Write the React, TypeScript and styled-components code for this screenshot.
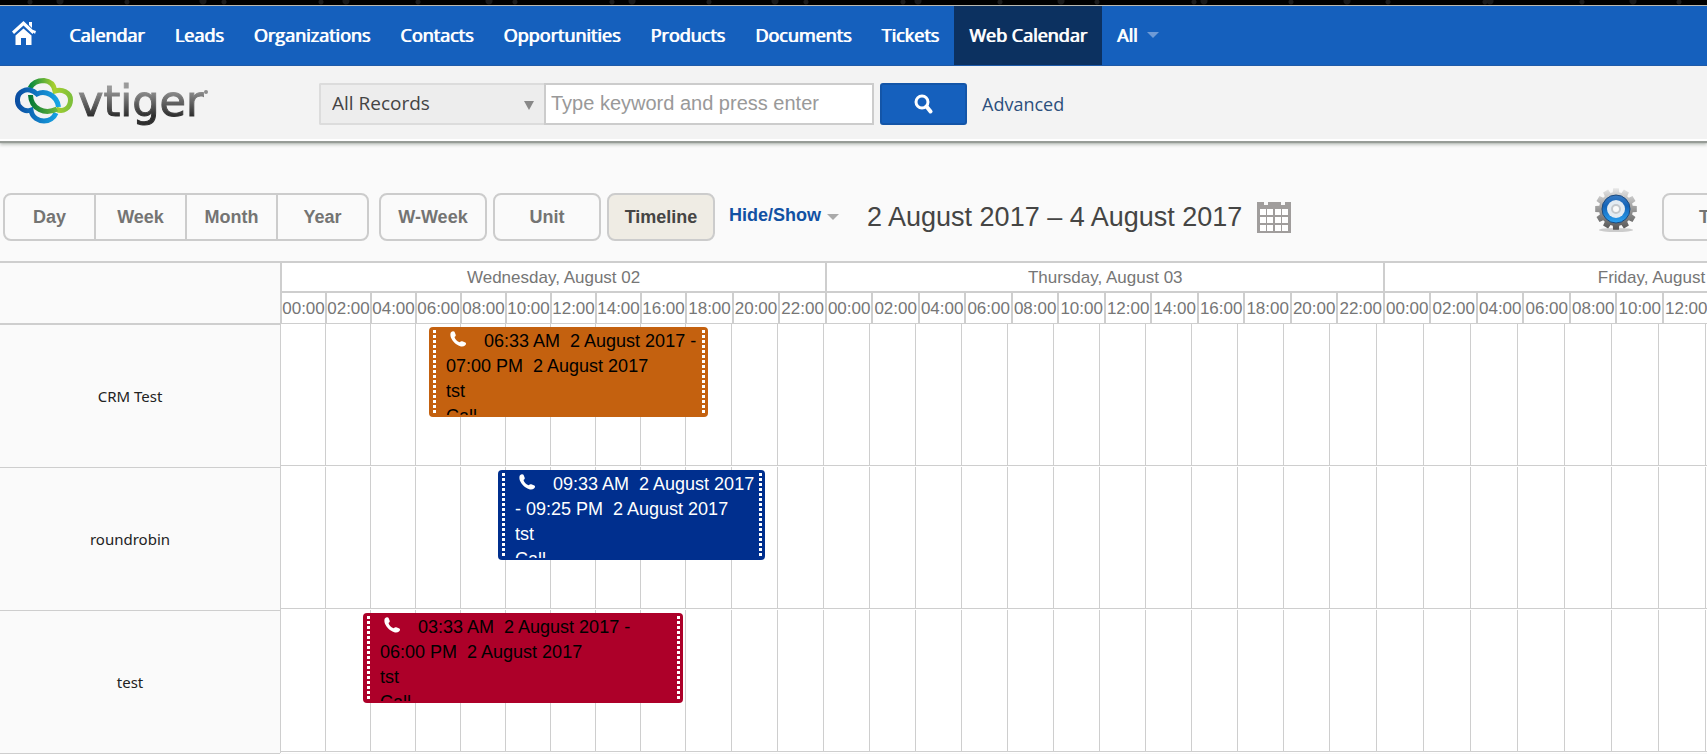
import React from "react";
import styled, { createGlobalStyle } from "styled-components";

const GlobalStyle = createGlobalStyle`
  *, *::before, *::after { box-sizing: border-box; }
  html { background: #fafafa; }
  body {
    margin: 0;
    overflow-x: hidden;
    color: #444;
    font-family: "Liberation Sans", Arial, sans-serif;
  }
  button, input, select { font: inherit; }
`;

const line = "#cecece";
const openSans = `"Open Sans", "Noto Sans", sans-serif`;

/* ---------- navigation ---------- */

const TopStrip = styled.div`
  height: 6px;
  border-bottom: 1px solid #b9b9b0;
  background:
    radial-gradient(circle at 30px 2px, #1c1c1c 2px, transparent 3px) 0 0 / 97px 5px,
    radial-gradient(circle at 60px 1px, #1a1a1a 3px, transparent 4px) 0 0 / 143px 5px,
    #000;
`;

const Nav = styled.nav`
  display: flex;
  height: 60px;
  background: #1560bd;
  border-bottom: 1px solid #1e5aa8;
  white-space: nowrap;
`;

const NavLink = styled.a<{ $active?: boolean }>`
  display: flex;
  align-items: center;
  gap: 10px;
  padding: 0 15px 1px;
  background: ${(p) => (p.$active ? "#0c3160" : "transparent")};
  color: #fff;
  font: 400 18px/24px ${openSans};
  text-decoration: none;
  text-shadow: 1px 0 #fff;
`;

const HomeLink = styled(NavLink)`
  padding: 0 18px 6px 12px;
`;

const Caret = styled.span<{ $color: string }>`
  border: 6px solid transparent;
  border-top-color: ${(p) => p.$color};
  border-bottom-width: 0;
`;

/* ---------- search header ---------- */

const Header = styled.header`
  display: flex;
  align-items: center;
  height: 75px;
  padding: 2px 16px 0 15px;
  border-bottom: 2px solid #fff;
  background: #f3f3f3;
  box-shadow: 0 2px 1px #979c97, 0 4px 3px #c4c8c4;
`;

const Brand = styled.a`
  display: flex;
  align-items: center;
  width: 304px;
  padding-bottom: 6px;
  text-decoration: none;
`;

const BrandName = styled.span`
  margin-left: 5px;
  background: linear-gradient(#999 25%, #2e2e2e 80%);
  background-clip: text;
  -webkit-background-clip: text;
  -webkit-text-stroke: 1px transparent;
  color: transparent;
  font: 43px/50px "DejaVu Sans", sans-serif;
`;

const BrandDot = styled.span`
  width: 4px;
  height: 4px;
  margin-bottom: 18px;
  border-radius: 50%;
  background: #8d8d8d;
`;

const SearchForm = styled.form`
  display: flex;
  align-items: center;
`;

const SelectWrap = styled.div`
  position: relative;
  width: 225px;
`;

const RecordSelect = styled.select`
  appearance: none;
  width: 100%;
  height: 42px;
  padding: 0 11px 2px;
  border: 2px solid #dcdcdc;
  border-right: 0;
  border-radius: 2px 0 0 2px;
  background: #ededed;
  color: #444;
  font: 19px/24px ${openSans};
`;

const SelectArrow = styled.svg`
  position: absolute;
  right: 10px;
  top: 18px;
  pointer-events: none;
`;

const Keyword = styled.input`
  width: 330px;
  height: 42px;
  padding: 0 5px;
  border: 2px solid #ccc;
  background: #fff;
  font-size: 20px;
  &::placeholder { color: #999; opacity: 1; }
`;

const SearchButton = styled.button`
  display: grid;
  place-items: center;
  width: 87px;
  height: 42px;
  margin: 0 15px 0 6px;
  border: 2px solid #1355a8;
  border-radius: 3px;
  background: #1560bd;
`;

const Advanced = styled.a`
  color: #2c4f7c;
  font: 18px/24px ${openSans};
  text-decoration: none;
`;

/* ---------- calendar toolbar ---------- */

const Toolbar = styled.div`
  display: flex;
  align-items: center;
  padding: 47px 0 17px 3px;
  white-space: nowrap;
`;

const ViewGroup = styled.div`
  display: flex;
  margin-right: 10px;
`;

const ViewButton = styled.button<{ $active?: boolean }>`
  width: 108px;
  height: 48px;
  margin-right: 6px;
  padding: 0;
  border: 2px solid #ccc;
  border-radius: 8px;
  background: ${(p) => (p.$active ? "#efece4" : "#fafafa")};
  color: ${(p) => (p.$active ? "#454544" : "#747473")};
  font-size: 18px;
  font-weight: 700;
`;

const GroupButton = styled(ViewButton)`
  width: 93px;
  margin: 0 -2px 0 0;
  border-radius: 0;
  &:first-child { border-radius: 8px 0 0 8px; }
  &:last-child { border-radius: 0 8px 8px 0; margin: 0; }
`;

const HideShow = styled.button`
  display: flex;
  align-items: center;
  gap: 6px;
  margin: 0 28px 4px 8px;
  padding: 0;
  border: 0;
  background: none;
  color: #1251a3;
  font-size: 18px;
  font-weight: 700;
  ${Caret} { margin-top: 4px; }
`;

const DateRange = styled.h1`
  margin: 0;
  color: #454544;
  font-size: 27px;
  font-weight: 400;
  line-height: 32px;
`;

const IconButton = styled.button`
  display: block;
  margin-left: 15px;
  padding: 0;
  border: 0;
  background: none;
  line-height: 0;
`;

const ToolbarEnd = styled.div`
  display: flex;
  align-items: center;
  width: 112px;
  margin-left: auto;
  overflow: hidden;
`;

const GearButton = styled(IconButton)`
  flex: none;
  margin: 0 24px 14px 0;
`;

const TodayButton = styled(ViewButton)`
  flex: none;
  width: auto;
  margin: 0;
  padding: 0 35px;
`;

/* ---------- timeline ---------- */

const Timeline = styled.main`
  display: flex;
  margin-top: -2px;
  border-top: 2px solid ${line};
`;

const People = styled.ul`
  flex: none;
  width: 280px;
  margin: 0;
  padding: 60px 0 0;
  list-style: none;
`;

const Person = styled.li`
  display: grid;
  place-items: center;
  height: 143px;
  padding-right: 20px;
  border-bottom: 1px solid ${line};
  color: #222;
  font: 15px/20px "Noto Sans", sans-serif;
  &:first-child {
    height: 145px;
    border-top: 2px solid ${line};
  }
`;

const Schedule = styled.div`
  flex: 1;
  min-width: 0;
  overflow: hidden;
`;

const Scale = styled.table`
  width: 1663px;
  border-left: 2px solid ${line};
  border-spacing: 0;
  table-layout: fixed;
  background: #fff;
  color: #767676;
  font-size: 17px;
  th {
    padding: 2px 0 0;
    border-right: 2px solid ${line};
    font-weight: 400;
  }
`;

const DayHead = styled.th`
  height: 30px;
  border-bottom: 2px solid ${line};
`;

const HourHead = styled.th`
  height: 31px;
  border-bottom: 1px solid ${line};
`;

const Track = styled.div`
  position: relative;
  display: grid;
  grid-template-columns: repeat(9, 45px) repeat(14, 46px) repeat(13, 47px);
  height: 143px;
  border-left: 1px solid ${line};
  padding-bottom: 1px;
  background: #fff;
`;

const Slot = styled.div`
  border-right: 1px solid ${line};
  border-bottom: 1px solid ${line};
`;

const EventCard = styled.article<{ $bg: string; $fg: string }>`
  position: absolute;
  top: 3px;
  height: 90px;
  padding: 2px 6px 2px 17px;
  border-radius: 4px;
  background: ${(p) => p.$bg};
  color: ${(p) => p.$fg};
  font-size: 18px;
  line-height: 25px;
  &::before, &::after {
    content: "";
    position: absolute;
    top: 3px;
    bottom: 2px;
    width: 3px;
    background: repeating-linear-gradient(#fff 0 3px, transparent 3px 5px);
  }
  &::before { left: 4px; }
  &::after { right: 3px; }
`;

const EventText = styled.div`
  height: 86px;
  overflow: hidden;
  white-space: pre-wrap;
  svg { margin: 0 18px 0 4px; }
  p { margin: 0; }
`;

const HomeIcon = () => (
  <svg width="24" height="24" viewBox="0 0 24 24" fill="#fff">
    <path d="M11.500 0 0 10.500 2 13l9.500-8.500 9 8.500 2-2.500z" />
    <path d="M17 1h3v6l-3-3zM21 9l3 1-1 3-2-2z" />
    <path d="m11.500 7.500-8 7V24h5.500v-7h5v7h5.500v-9.500z" />
  </svg>
);

const PhoneIcon = () => (
  <svg width="16" height="16" viewBox="0 0 16 16" fill="#fff">
    <path d="M.8 1.500C2 .2 3.600-.3 4.500.8l1.200 3c.2.900-.1 1.500-1.200 2.200.6 2.300 2.700 4.400 5.300 5.300.8-1.100 1.500-1.400 2.500-1l3.100 1.300c1 .7.800 1.900-.4 2.900-1.800 1.600-4.700 1.400-7.800-.7C3.300 11.400-1 5.700.8 1.500z" />
  </svg>
);

const SearchIcon = () => (
  <svg width="20" height="20" viewBox="0 0 20 20" fill="none" stroke="#fff">
    <circle cx="8" cy="8" r="6" strokeWidth="3" />
    <path d="m12.500 12.500 4 5" strokeWidth="4" strokeLinecap="round" />
  </svg>
);

const CloudLogo = () => (
  <svg width="58" height="46" viewBox="0 0 58 46" fill="none" strokeWidth="5">
    <defs>
      <linearGradient id="green" x1="0" x2="1">
        <stop offset="0" stopColor="#07883e" />
        <stop offset=".6" stopColor="#a9d030" />
        <stop offset="1" stopColor="#7fc03a" />
      </linearGradient>
      <linearGradient id="leaf" x1="0" x2="1">
        <stop offset="0" stopColor="#067a35" />
        <stop offset="1" stopColor="#6db83c" />
      </linearGradient>
      <linearGradient id="blue" x1="0" x2="1">
        <stop offset="0" stopColor="#0b4ea2" />
        <stop offset="1" stopColor="#16a5e4" />
      </linearGradient>
    </defs>
    <path d="M15 10C18 4 23 2.500 29 2.500 35 3 39 7 40 13c7-2 15.500 1 15.500 9S48 35 41 31" stroke="url(#green)" />
    <path d="M43.500 29C42 17 30 12 22 16 18 12 12 10.500 8 13 1 16 1 26 6 30c3 3 7 3 10 2 1 8 8 11 13 11s10-3 12-8" stroke="url(#blue)" />
    <path d="M15.500 17C16 31 30 37 42 31" stroke="url(#leaf)" />
  </svg>
);

const CalendarIcon = () => (
  <svg width="34" height="31" viewBox="0 0 34 31">
    <path d="M0 0h7v3h4V0h13v3h4V0h6v31H0z" fill="#a09d9c" />
    {[7, 15, 23].map((y) =>
      [3, 10, 18, 25].map((x) => <rect key={`${x}-${y}`} x={x} y={y} width="6" height="6" fill="#fff" />)
    )}
  </svg>
);

/* Outline of a twelve-toothed wheel centred on (21, 21). */
const gearOutline = Array.from({ length: 12 }, (_, i) =>
  [[-11, 17], [-8, 21], [8, 21], [11, 17]].map(([offset, radius]) => {
    const angle = ((i * 30 + offset) * Math.PI) / 180;
    return `${(21 + radius * Math.sin(angle)).toFixed(1)},${(21 - radius * Math.cos(angle)).toFixed(1)}`;
  }).join(" ")
).join(" ");

const GearIcon = () => (
  <svg width="43" height="44" viewBox="0 0 43 44">
    <defs>
      <linearGradient id="steel" x1="0" x2="0" y1="0" y2="1">
        <stop offset="0" stopColor="#e8e8e8" />
        <stop offset=".5" stopColor="#999" />
        <stop offset="1" stopColor="#555" />
      </linearGradient>
      <linearGradient id="ring" x1="0" x2="0" y1="0" y2="1">
        <stop offset="0" stopColor="#3a7cc4" />
        <stop offset=".4" stopColor="#1263b8" />
        <stop offset="1" stopColor="#2ba3f2" />
      </linearGradient>
    </defs>
    <ellipse cx="21" cy="42" rx="17" ry="2" fill="#ccc" />
    <polygon points={gearOutline} fill="url(#steel)" />
    <circle cx="21" cy="21" r="14" fill="url(#ring)" stroke="#1d4a7d" strokeWidth="1" />
    <circle cx="21" cy="21" r="9" fill="#e3ebf2" />
    <circle cx="21" cy="21" r="4" fill="#fafafa" stroke="#c4c8cc" strokeWidth="2" />
  </svg>
);

const modules = ["Calendar", "Leads", "Organizations", "Contacts", "Opportunities", "Products", "Documents", "Tickets", "Web Calendar"];
const days = ["Wednesday, August 02", "Thursday, August 03", "Friday, August 04"];
const hourColumns = Array.from({ length: 36 }, (_, i) => ({
  label: `${String((i % 12) * 2).padStart(2, "0")}:00`,
  width: i < 9 ? 45 : i % 2 ? 47 : 46,
}));

const people = [
  { name: "CRM Test", left: 148, width: 279, bg: "#c4610f", fg: "#000", from: "06:33 AM", to: "07:00 PM" },
  { name: "roundrobin", left: 217, width: 267, bg: "#002f8e", fg: "#fff", from: "09:33 AM", to: "09:25 PM" },
  { name: "test", left: 82, width: 320, bg: "#ad0029", fg: "#000", from: "03:33 AM", to: "06:00 PM" },
];

export default function App() {
  return (
    <>
      <GlobalStyle />
      <TopStrip />
      <Nav>
        <HomeLink href="#" aria-label="Home"><HomeIcon /></HomeLink>
        {modules.map((m) => (
          <NavLink key={m} href="#" $active={m === "Web Calendar"}>{m}</NavLink>
        ))}
        <NavLink href="#">All <Caret $color="#6f9bd6" /></NavLink>
      </Nav>
      <Header>
        <Brand href="#"><CloudLogo /><BrandName>vtiger</BrandName><BrandDot /></Brand>
        <SearchForm onSubmit={(e: React.FormEvent) => e.preventDefault()}>
          <SelectWrap>
            <RecordSelect aria-label="Record type"><option>All Records</option></RecordSelect>
            <SelectArrow width="10" height="9"><path d="M0 0h10L5 9z" fill="#888" /></SelectArrow>
          </SelectWrap>
          <Keyword type="text" aria-label="Keyword" placeholder="Type keyword and press enter" />
          <SearchButton aria-label="Search"><SearchIcon /></SearchButton>
          <Advanced href="#">Advanced</Advanced>
        </SearchForm>
      </Header>
      <Toolbar>
        <ViewGroup>
          {["Day", "Week", "Month", "Year"].map((v) => <GroupButton key={v}>{v}</GroupButton>)}
        </ViewGroup>
        <ViewButton>W-Week</ViewButton>
        <ViewButton>Unit</ViewButton>
        <ViewButton $active>Timeline</ViewButton>
        <HideShow>Hide/Show <Caret $color="#aaa" /></HideShow>
        <DateRange>2 August 2017 – 4 August 2017</DateRange>
        <IconButton aria-label="Pick a date"><CalendarIcon /></IconButton>
        <ToolbarEnd>
          <GearButton aria-label="Settings"><GearIcon /></GearButton>
          <TodayButton>Today</TodayButton>
        </ToolbarEnd>
      </Toolbar>
      <Timeline>
        <People>
          {people.map((p) => <Person key={p.name}>{p.name}</Person>)}
        </People>
        <Schedule>
          <Scale>
            <colgroup>
              {hourColumns.map((c, i) => <col key={i} width={c.width} />)}
            </colgroup>
            <thead>
              <tr>{days.map((d) => <DayHead key={d} colSpan={12}>{d}</DayHead>)}</tr>
              <tr>{hourColumns.map((c, i) => <HourHead key={i}>{c.label}</HourHead>)}</tr>
            </thead>
          </Scale>
          {people.map((p) => (
            <Track key={p.name}>
              {hourColumns.map((_, i) => <Slot key={i} />)}
              <EventCard $bg={p.bg} $fg={p.fg} style={{ left: p.left, width: p.width }}>
                <EventText>
                  <p><PhoneIcon />{`${p.from}  2 August 2017 - ${p.to}  2 August 2017`}</p>
                  <p>tst</p>
                  <p>Call</p>
                </EventText>
              </EventCard>
            </Track>
          ))}
        </Schedule>
      </Timeline>
    </>
  );
}
